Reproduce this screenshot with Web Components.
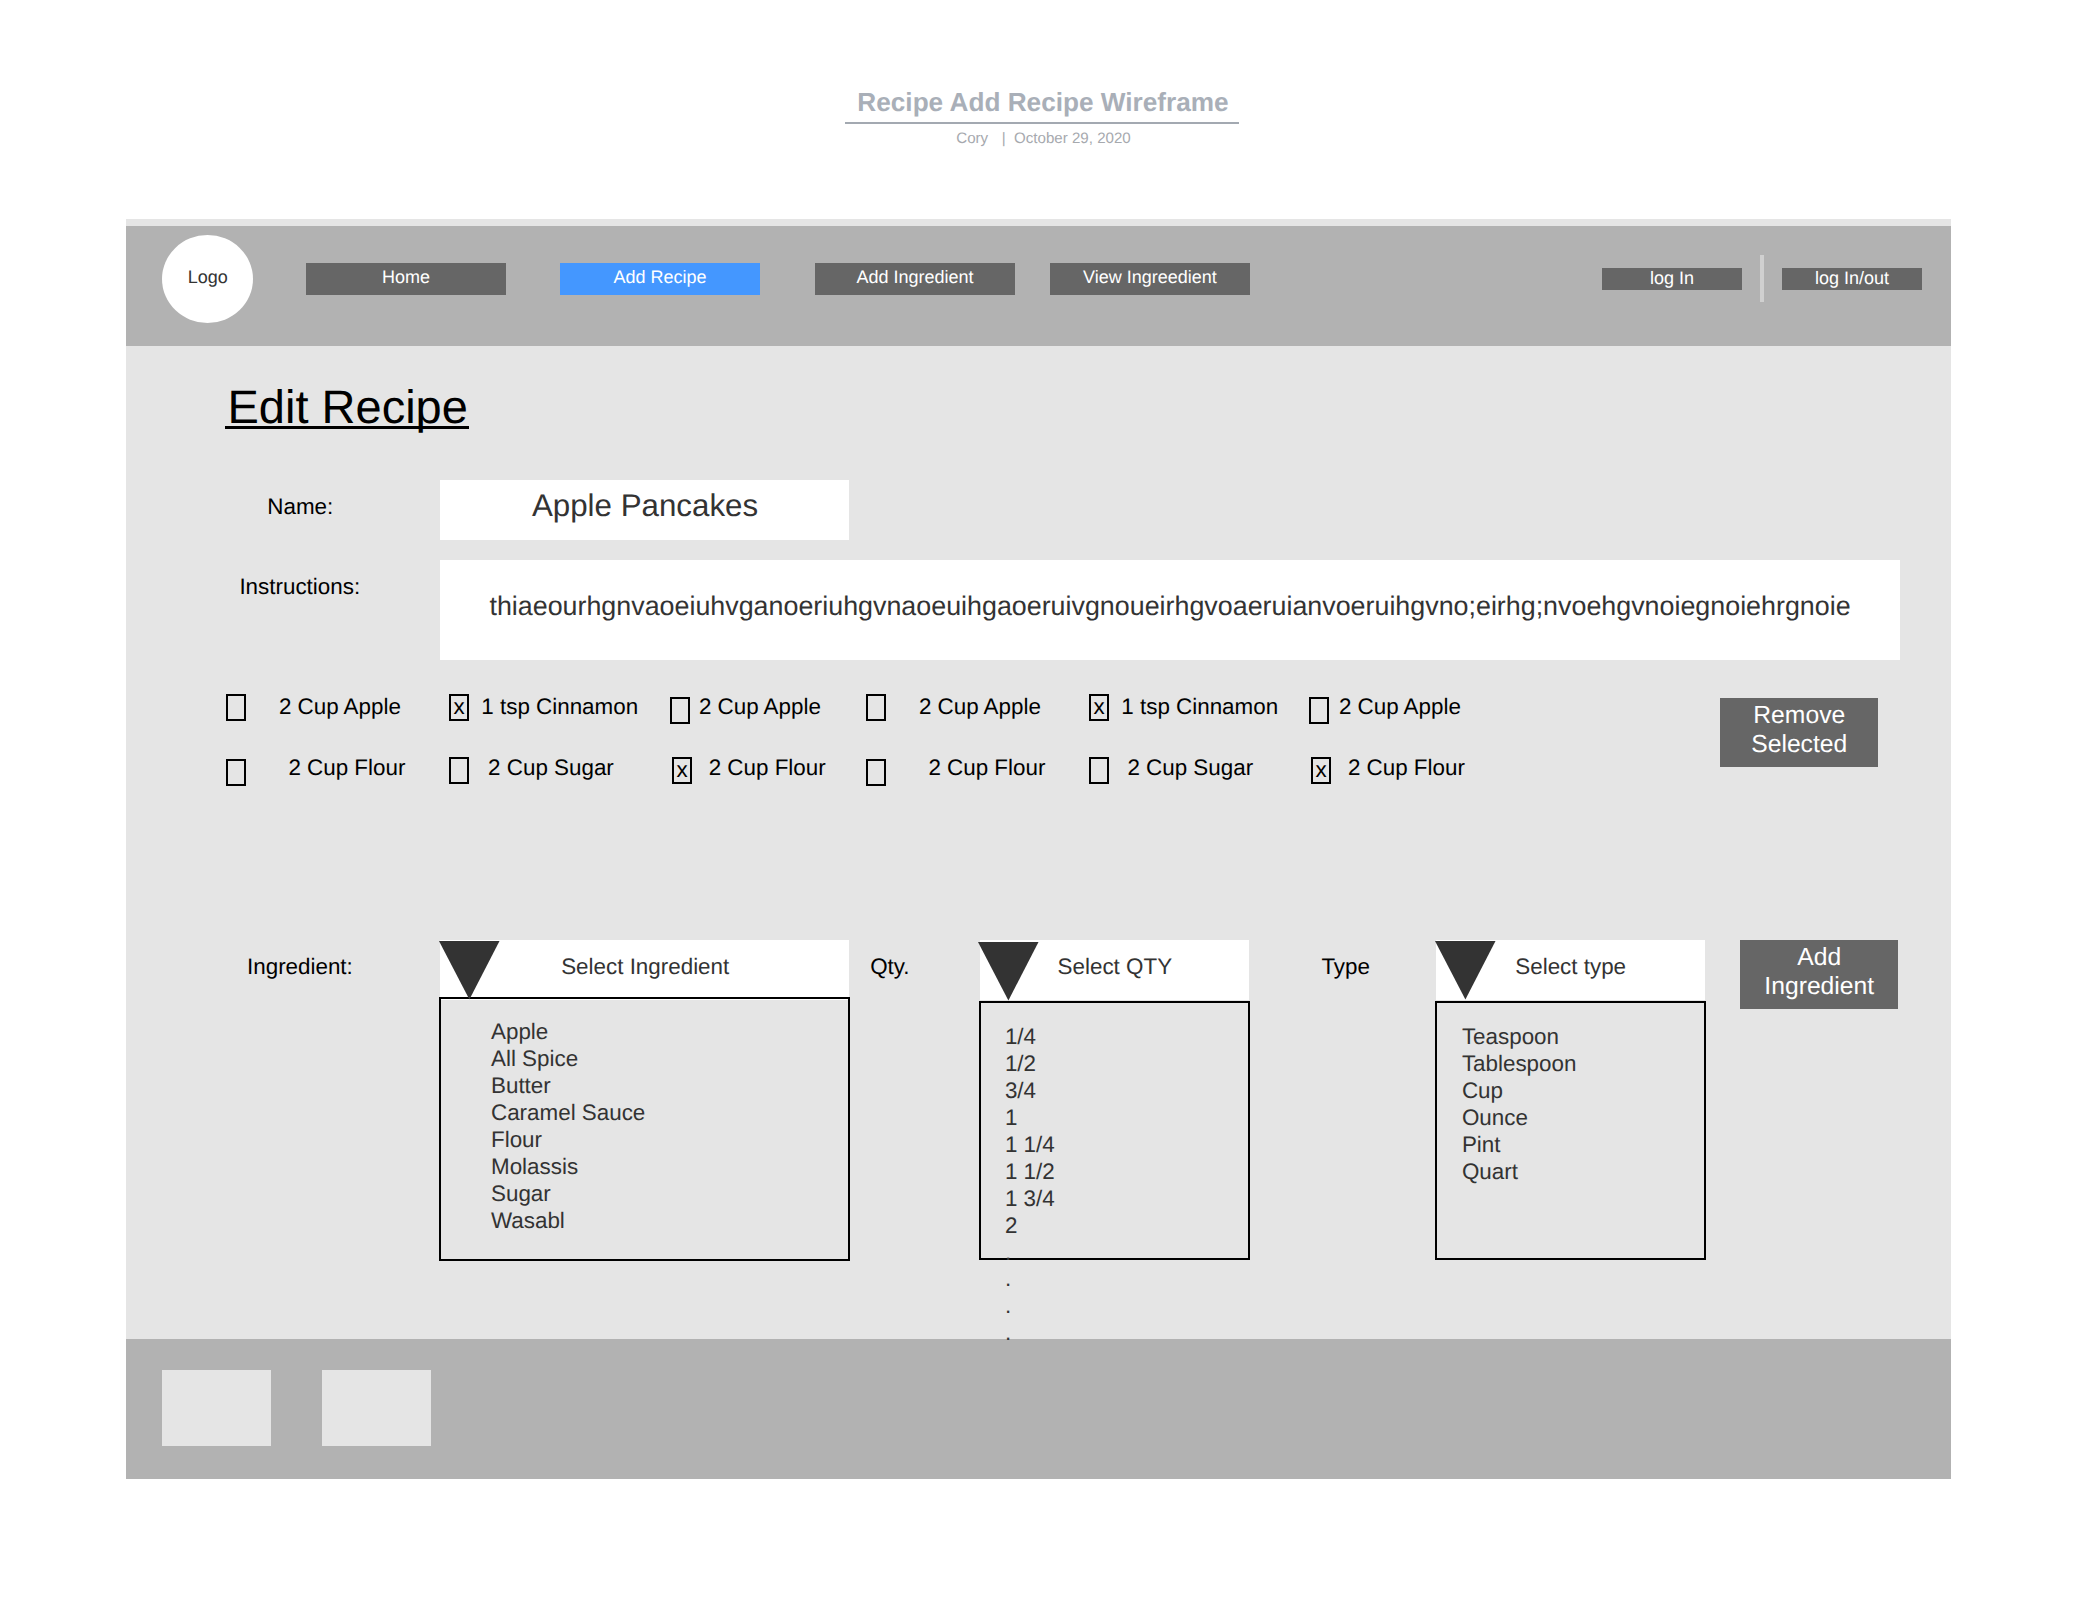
<!DOCTYPE html>
<html lang="en">
<head>
<meta charset="utf-8">
<title>Recipe Add Recipe Wireframe</title>
<style>
  html, body { margin: 0; background: #fff; }
  body { width: 2080px; height: 1600px; overflow: hidden; font-family: "Liberation Sans", Arial, sans-serif; text-rendering: geometricPrecision; }
</style>
</head>
<body>
<recipe-page></recipe-page>
<script>
const define = (name, html) => {
  const t = document.createElement('template');
  t.innerHTML = html;
  customElements.define(name, class extends HTMLElement {
    constructor() {
      super();
      this.attachShadow({ mode: 'open' }).appendChild(t.content.cloneNode(true));
    }
  });
};

define('doc-heading', `
<style>
  :host { display: flex; flex-direction: column; align-items: center; width: 394px; color: #a9afb8; }
  h1 { margin: 0; padding-left: 2px; font-size: 26.2px; line-height: 30px; font-weight: bold; white-space: nowrap; }
  .rule { width: 394px; height: 2px; background: #a3a9b1; margin-top: 5px; }
  .meta { display: flex; margin-top: 6px; padding-left: 3px; font-size: 15.1px; line-height: 18px; color: #a6a9ae; white-space: pre; }
</style>
<h1><slot name="title"></slot></h1>
<div class="rule"></div>
<div class="meta"><slot name="author"></slot><span style="margin:0 8.5px 0 13.5px">|</span><slot name="date"></slot></div>`);

define('site-logo', `
<style>
  :host { display: block; width: 91px; height: 88px; border-radius: 50%; background: #fff; color: #333; font-size: 18px; line-height: 22px; text-align: center; padding: 31px 0 0 0.5px; box-sizing: border-box; }
</style><slot></slot>`);

define('nav-button', `
<style>
  :host { display: block; box-sizing: border-box; width: 200px; height: 32px; padding-top: 3px; background: #666; color: #fff; font-size: 18px; line-height: 22px; text-align: center; white-space: nowrap; }
  :host([active]) { background: #4497ff; }
  :host([slim]) { width: 140px; height: 22px; padding-top: 0; line-height: 20px; }
</style><slot></slot>`);

define('site-header', `
<style>
  :host { display: flex; align-items: flex-start; box-sizing: border-box; height: 120px; background: #b2b2b2; padding: 0 29px 0 36px; }
  .bar { width: 4px; height: 47px; background: #d0d0d0; margin: 29px 18px 0; }
  nav { display: flex; margin: 37px 0 0 53px; }
  .login { display: flex; align-items: flex-start; margin-left: auto; }
  .login nav-button { margin-top: 42px; }
</style>
<site-logo style="margin-top:9px">Logo</site-logo>
<nav>
  <nav-button>Home</nav-button>
  <nav-button active style="margin-left:54px">Add Recipe</nav-button>
  <nav-button style="margin-left:55px">Add Ingredient</nav-button>
  <nav-button style="margin-left:35px">View Ingreedient</nav-button>
</nav>
<div class="login"><nav-button slim>log In</nav-button><div class="bar"></div><nav-button slim>log In/out</nav-button></div>`);

define('field-label', `
<style>
  :host { display: block; font-size: 22.4px; line-height: 27px; color: #000; white-space: nowrap; box-sizing: border-box; flex: none; }
</style><slot></slot>`);

define('text-field', `
<style>
  :host { display: block; box-sizing: border-box; background: #fff; color: #333; text-align: center; white-space: nowrap; flex: none; }
</style><slot></slot>`);

define('action-button', `
<style>
  :host { display: block; box-sizing: border-box; width: 158px; height: 69px; background: #666; color: #fff; font-size: 24.7px; line-height: 29.5px; text-align: center; padding: 2.5px 0 0 0.5px; flex: none; }
</style><slot></slot>`);

define('ingredient-check', `
<style>
  :host { display: flex; align-items: flex-start; font-size: 22.4px; line-height: 27px; color: #000; white-space: nowrap; }
  .box { box-sizing: border-box; width: 20px; height: 27px; border: 2px solid #000; margin-top: var(--dy, 1px); margin-right: calc(var(--gap, 32px) + 0.9px); display: flex; justify-content: center; line-height: 21px; flex: none; }
</style>
<span class="box"><slot name="mark"></slot></span><span><slot></slot></span>`);

define('drop-select', `
<style>
  :host { display: block; flex: none; width: var(--w); color: #333; font-size: 22.4px; line-height: 27px; white-space: nowrap; }
  .head { position: relative; height: 60px; background: #fff; box-sizing: border-box; padding: 13px 0 0 var(--hx); }
  svg { position: absolute; left: var(--ax); top: var(--ay); overflow: visible; z-index: 1; }
  .list { position: relative; box-sizing: border-box; margin: var(--ly) -1px 0; height: var(--lh); border: 2px solid #000; padding: var(--pt) 0 0 var(--px); line-height: 26.95px; white-space: pre-line; }
</style>
<div class="head"><slot name="head"></slot>
<svg width="60.5" height="58.5" viewBox="0 0 60.5 58.5"><polygon points="0,0 60.5,0 30.4,58.5" fill="#333"/></svg></div>
<div class="list"><slot></slot></div>`);

define('site-footer', `
<style>
  :host { display: flex; gap: 51px; box-sizing: border-box; height: 140px; background: #b2b2b2; padding: 31px 36px; }
  div { width: 109px; height: 76px; background: #e5e5e5; }
</style><div></div><div></div>`);

define('recipe-form', `
<style>
  :host { display: flex; flex-direction: column; height: 993px; box-sizing: border-box; position: relative; z-index: 1; }
  h2 { box-sizing: border-box; margin: 34px 0 0 99px; height: 49px; width: 244px; padding-left: 2.5px; border-bottom: 3px solid #000; font-size: 47px; line-height: 54px; font-weight: normal; color: #000; white-space: nowrap; }
  .row { display: flex; align-items: flex-start; }
  .checks { display: grid; grid-template-columns: 223px 223px 194px 223px 222px 409px; grid-auto-rows: 61px; margin-left: 100px; }
  .shift { margin-left: -2px; }
</style>
<h2>Edit Recipe</h2>
<div class="row" style="margin-top:51px">
  <field-label style="width:314px;padding:13px 0 0 141.3px">Name:</field-label>
  <text-field style="width:409px;height:60px;font-size:31.3px;line-height:36px;padding:8px 0 0 1px">Apple Pancakes</text-field>
</div>
<div class="row" style="margin-top:20px">
  <field-label style="width:314px;padding:13.4px 0 0 113.4px">Instructions:</field-label>
  <text-field style="width:1460px;height:100px;font-size:26.85px;line-height:32px;padding-top:30px">thiaeourhgnvaoeiuhvganoeriuhgvnaoeuihgaoeruivgnoueirhgvoaeruianvoeruihgvno;eirhg;nvoehgvnoiegnoiehrgnoie</text-field>
</div>
<div class="row" style="margin-top:33px;height:247px">
  <div class="checks">
    <ingredient-check>2 Cup Apple</ingredient-check>
    <ingredient-check style="--gap:11.4px"><span slot="mark">x</span>1 tsp Cinnamon</ingredient-check>
    <ingredient-check class="shift" style="--gap:8px;--dy:4px">2 Cup Apple</ingredient-check>
    <ingredient-check>2 Cup Apple</ingredient-check>
    <ingredient-check style="--gap:11.4px"><span slot="mark">x</span>1 tsp Cinnamon</ingredient-check>
    <ingredient-check class="shift" style="--gap:9px;--dy:4px">2 Cup Apple</ingredient-check>
    <ingredient-check style="--gap:41.5px;--dy:5px">2 Cup Flour</ingredient-check>
    <ingredient-check style="--gap:18.2px;--dy:3px">2 Cup Sugar</ingredient-check>
    <ingredient-check style="--gap:15.8px;--dy:3px"><span slot="mark">x</span>2 Cup Flour</ingredient-check>
    <ingredient-check style="--gap:41.5px;--dy:5px">2 Cup Flour</ingredient-check>
    <ingredient-check style="--gap:17.5px;--dy:3px">2 Cup Sugar</ingredient-check>
    <ingredient-check style="--gap:16px;--dy:3px"><span slot="mark">x</span>2 Cup Flour</ingredient-check>
  </div>
  <action-button style="margin-top:5px">Remove<br>Selected</action-button>
</div>
<div class="row">
  <field-label style="width:314px;padding:13px 0 0 121px">Ingredient:</field-label>
  <drop-select style="--w:409px;--hx:121.2px;--ax:-1.5px;--ay:1px;--ly:-3px;--lh:264px;--pt:19.9px;--px:50px"><span slot="head">Select Ingredient</span>Apple<br>All Spice<br>Butter<br>Caramel Sauce<br>Flour<br>Molassis<br>Sugar<br>Wasabl</drop-select>
  <field-label style="width:131px;padding:13px 0 0 21.2px">Qty.</field-label>
  <drop-select style="--w:269px;--hx:77.6px;--ax:-2.5px;--ay:2px;--ly:1px;--lh:259px;--pt:20.9px;--px:23.9px"><span slot="head">Select QTY</span>1/4<br>1/2<br>3/4<br>1<br>1 1/4<br>1 1/2<br>1 3/4<br>2<br>.<br>.<br>.<br>.</drop-select>
  <field-label style="width:187px;padding:13px 0 0 72.4px">Type</field-label>
  <drop-select style="--w:269px;--hx:79.3px;--ax:-0.9px;--ay:1px;--ly:1px;--lh:259px;--pt:20.9px;--px:24.9px"><span slot="head">Select type</span>Teaspoon<br>Tablespoon<br>Cup<br>Ounce<br>Pint<br>Quart</drop-select>
  <action-button style="margin-left:35px">Add<br>Ingredient</action-button>
</div>`);

define('recipe-page', `
<style>
  :host { display: flex; flex-direction: column; padding-left: 126px; }
  doc-heading { margin: 87px 0 0 719px; height: 132px; }
  main { width: 1825px; background: #e5e5e5; padding-top: 7px; }
</style>
<doc-heading><span slot="title">Recipe Add Recipe Wireframe</span><span slot="author">Cory</span><span slot="date">October 29, 2020</span></doc-heading>
<main>
  <site-header></site-header>
  <recipe-form></recipe-form>
  <site-footer></site-footer>
</main>`);
</script>
</body>
</html>
